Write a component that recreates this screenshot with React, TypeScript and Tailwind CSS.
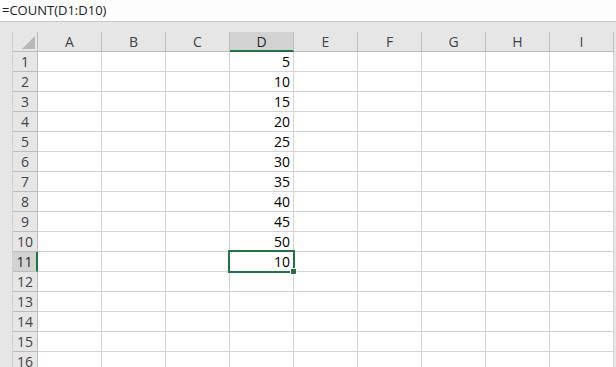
import React from 'react';

const columns = ['A', 'B', 'C', 'D', 'E', 'F', 'G', 'H', 'I'];
const values: Record<number, string> = {
  1: '5', 2: '10', 3: '15', 4: '20', 5: '25', 6: '30', 7: '35', 8: '40', 9: '45', 10: '50', 11: '10',
};
const rows = Array.from({ length: 16 }, (_, i) => i + 1);

export default function App() {
  return (
    <div className="w-[616px] h-[367px] overflow-hidden bg-[#e6e6e6] font-['Open_Sans',sans-serif]">
      {/* Formula bar */}
      <div className="h-[22px] bg-[#fdfdfd] border-b border-[#c6c6c6] pl-[2px] flex items-center text-[13px] text-[#222]">
        =COUNT(D1:D10)
      </div>

      <div className="pt-[10px] pl-[12px]">
        <div className="border-l border-[#d0d0d0] w-[603px]">
          {/* Column headers */}
          <div className="flex h-[20px]">
            <div className="w-[25px] shrink-0 border-r border-b border-[#bdbdbd] bg-[#e6e6e6] flex items-end justify-end p-[2px]">
              <svg width="13" height="13" viewBox="0 0 13 13">
                <polygon points="13,0 13,13 0,13" fill="#b8b8b8" />
              </svg>
            </div>
            {columns.map((c) => (
              <div
                key={c}
                className={
                  c === 'D'
                    ? 'w-[64px] shrink-0 border-r border-[#bdbdbd] border-b-2 border-b-[#217346] bg-[#d2d2d2] flex items-center justify-center text-[14px] text-[#262626]'
                    : 'w-[64px] shrink-0 border-r border-b border-[#bdbdbd] bg-[#e6e6e6] flex items-center justify-center text-[14px] text-[#444]'
                }
              >
                {c}
              </div>
            ))}
          </div>

          {/* Rows */}
          {rows.map((r) => (
            <div key={r} className="flex h-[20px]">
              <div
                className={
                  r === 11
                    ? 'w-[25px] shrink-0 border-r-2 border-r-[#217346] border-b border-b-[#bdbdbd] bg-[#d2d2d2] flex items-center justify-center text-[14px] text-[#262626]'
                    : 'w-[25px] shrink-0 border-r border-b border-[#bdbdbd] bg-[#e6e6e6] flex items-center justify-center text-[14px] text-[#444]'
                }
              >
                {r}
              </div>
              {columns.map((c) => (
                <div
                  key={c}
                  className="relative w-[64px] shrink-0 border-r border-b border-[#d4d4d4] bg-white flex items-center justify-end pr-[3px] text-[14px] text-black"
                >
                  {c === 'D' ? values[r] : ''}
                  {c === 'D' && r === 11 && (
                    <>
                      <div className="absolute z-10 -left-[2px] -top-[2px] w-[67px] h-[23px] border-2 border-[#217346]" />
                      <div className="absolute z-20 -right-[4px] -bottom-[4px] w-[7px] h-[7px] bg-[#217346] border border-white" />
                    </>
                  )}
                </div>
              ))}
            </div>
          ))}
        </div>
      </div>
    </div>
  );
}
